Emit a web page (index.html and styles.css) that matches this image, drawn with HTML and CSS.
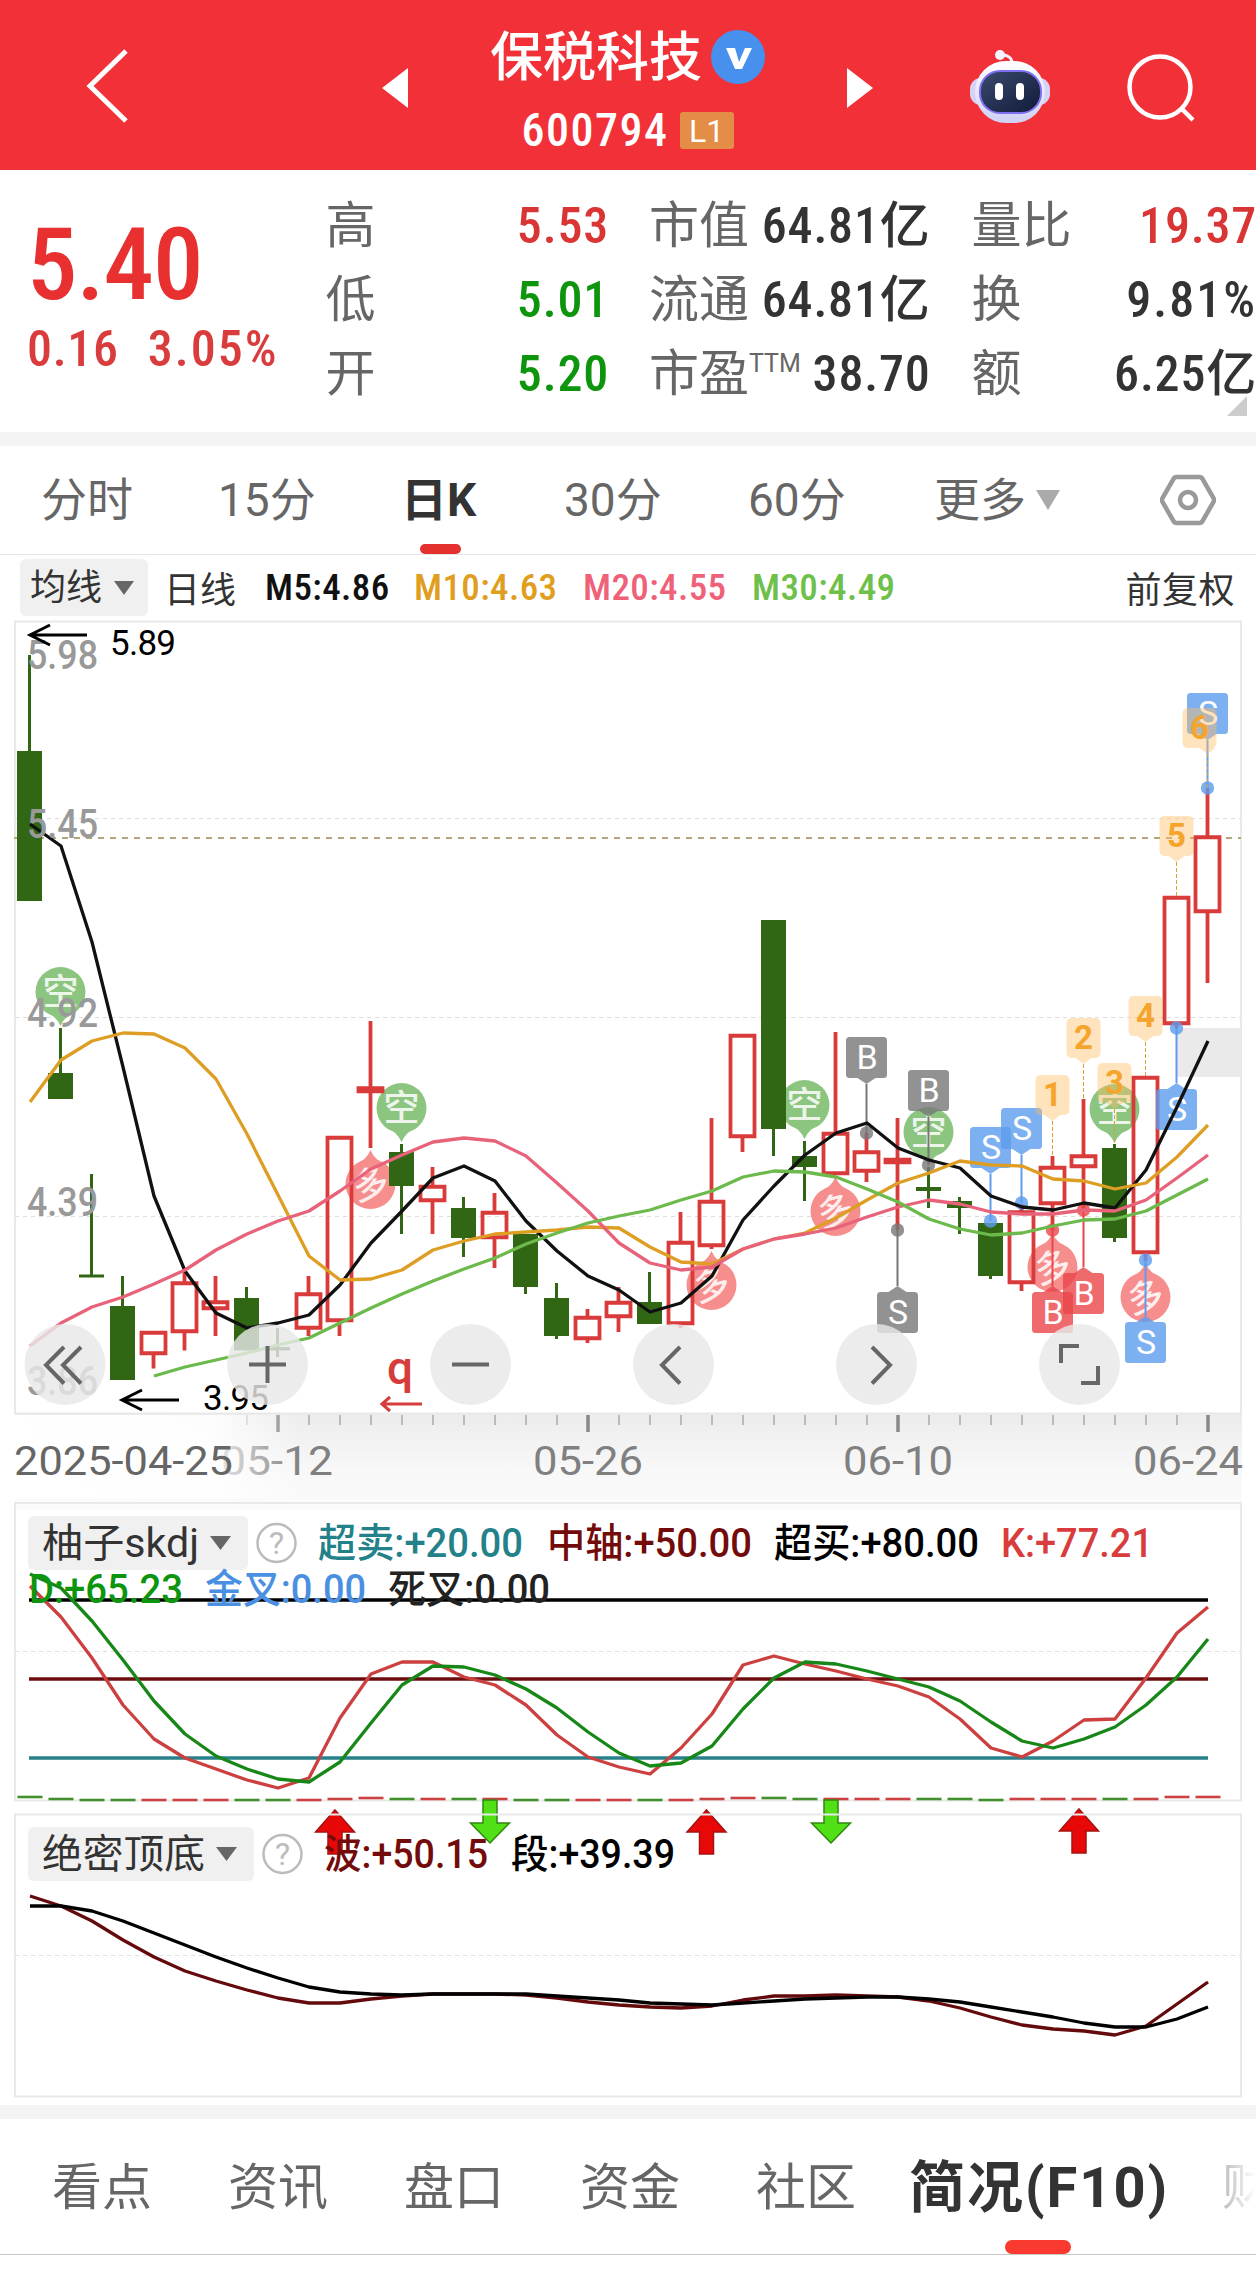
FILE: index.html
```html
<!DOCTYPE html>
<html lang="zh-CN">
<head>
  <meta charset="UTF-8">
  <meta name="viewport" content="width=device-width, initial-scale=1.0">
  <title>保税科技 600794</title>
  <link rel="stylesheet" href="styles.css">
</head>
<body>
  <header class="topbar">
    <svg class="back" width="48" height="80" viewBox="0 0 48 80"><path d="M42 5L6 40l36 35" fill="none" stroke="#fff" stroke-width="5"/></svg>
    <svg class="prev" width="26" height="40" viewBox="0 0 26 40"><path d="M26 0v40L0 20z" fill="#fff"/></svg>
    <div class="stock">
      <div class="stock-name">保税科技
        <svg width="54" height="54" viewBox="0 0 54 54"><circle cx="27" cy="27" r="27" fill="#4790ee"/><path d="M15 18h9l4 14 6-14h7L31 39h-7z" fill="#fff"/></svg>
      </div>
      <div class="stock-code"><span class="num">600794</span><span class="level">L1</span></div>
    </div>
    <svg class="next" width="26" height="40" viewBox="0 0 26 40"><path d="M0 0v40l26-20z" fill="#fff"/></svg>
    <svg class="robot" width="82" height="76" viewBox="0 0 82 76">
      <defs>
        <linearGradient id="shell" x1="0" y1="0" x2="0" y2="1"><stop offset="0" stop-color="#fff"/><stop offset="1" stop-color="#cfd0f4"/></linearGradient>
        <linearGradient id="face" x1="0" y1="0" x2="1" y2="1"><stop offset="0" stop-color="#3a4a6e"/><stop offset="1" stop-color="#101a38"/></linearGradient>
      </defs>
      <path d="M43 14c0-5-4-8-10-8" fill="none" stroke="#eef" stroke-width="3"/>
      <circle cx="31" cy="6" r="5" fill="#f4f4ff"/>
      <rect x="1" y="29" width="80" height="27" rx="11" fill="#d5d2f6"/>
      <rect x="6" y="12" width="70" height="62" rx="31" fill="url(#shell)"/>
      <rect x="11" y="22" width="61" height="42" rx="20" fill="url(#face)" stroke="#7d6ff0" stroke-width="2"/>
      <rect x="26" y="34" width="8" height="17" rx="4" fill="#fff"/>
      <rect x="47" y="34" width="8" height="17" rx="4" fill="#fff"/>
    </svg>
    <svg class="search" width="72" height="72" viewBox="0 0 72 72"><circle cx="34" cy="36" r="30.5" fill="none" stroke="#fff" stroke-width="4.5"/><path d="M55 57l12 12" stroke="#fff" stroke-width="4.5"/></svg>
  </header>

  <section class="quote">
    <div class="price">
      <div class="price-now num">5.40</div>
      <div class="price-diff num"><span>0.16</span><span class="pct">3.05%</span></div>
    </div>
    <dl class="stats col-a">
      <div><dt>高</dt><dd class="up">5.53</dd></div>
      <div><dt>低</dt><dd class="down">5.01</dd></div>
      <div><dt>开</dt><dd class="down">5.20</dd></div>
    </dl>
    <dl class="stats col-b">
      <div><dt>市值</dt><dd>64.81亿</dd></div>
      <div><dt>流通</dt><dd>64.81亿</dd></div>
      <div><dt>市盈<sup>TTM</sup></dt><dd>38.70</dd></div>
    </dl>
    <dl class="stats col-c">
      <div><dt>量比</dt><dd class="up">19.37</dd></div>
      <div><dt>换</dt><dd class="pct">9.81%</dd></div>
      <div><dt>额</dt><dd>6.25亿</dd></div>
    </dl>
    <i class="corner"></i>
  </section>

  <nav class="periods">
    <a>分时</a>
    <a>15分</a>
    <a class="active">日K</a>
    <a>30分</a>
    <a>60分</a>
    <a>更多<i class="caret light"></i></a>
    <svg width="56" height="52" viewBox="0 0 56 52"><path d="M16.500 3h23q2 0 3 2l11 19q1 2 0 4l-11 19q-1 2-3 2h-23q-2 0-3-2L2.500 28q-1-2 0-4l11-19q1-2 3-2z" fill="none" stroke="#999" stroke-width="4.500"/><circle cx="28" cy="26" r="8" fill="none" stroke="#999" stroke-width="4.500"/></svg>
  </nav>

  <div class="ma-row">
    <span class="chip">均线<i class="caret"></i></span>
    <span class="ma-day">日线</span>
    <span class="ma m5">M5:4.86</span>
    <span class="ma m10">M10:4.63</span>
    <span class="ma m20">M20:4.55</span>
    <span class="ma m30">M30:4.49</span>
    <span class="adjust">前复权</span>
  </div>

  <svg class="chart" width="1256" height="882" viewBox="0 618 1256 882">
    <defs>
      <linearGradient id="axisFade" x1="0" y1="0" x2="0" y2="1"><stop offset="0" stop-color="#ececec"/><stop offset=".6" stop-color="#f8f8f8"/><stop offset="1" stop-color="#fbfbfb"/></linearGradient>
      <linearGradient id="leftFade" x1="0" y1="0" x2="1" y2="0"><stop offset="0" stop-color="#fff"/><stop offset=".7" stop-color="#fff" stop-opacity=".9"/><stop offset="1" stop-color="#fff" stop-opacity="0"/></linearGradient>
    </defs>
    <rect x="15" y="1414" width="1227" height="94" fill="url(#axisFade)"/>
    <path class="frame" d="M15 621.500H1241V1413.500H15z"/>
    <path class="grid" d="M15 818.500H1241M15 1017.500H1241M15 1216.500H1241"/>
    <path d="M14 838H1241" fill="none" stroke="#b5a47c" stroke-width="2" stroke-dasharray="6 6"/>
    <rect x="1177" y="1028" width="63" height="49" fill="#eaeaea"/>
    <g id="balloons"></g>
    <g id="candles"></g>
    <g id="signals"></g>
    <g id="averages"></g>
    <g id="steps"></g>
    <g id="ticks"></g>

    <g class="scale">
      <text x="27" y="669" textLength="71" lengthAdjust="spacingAndGlyphs">5.98</text>
      <text x="27" y="838" textLength="71" lengthAdjust="spacingAndGlyphs">5.45</text>
      <text x="27" y="1027" textLength="71" lengthAdjust="spacingAndGlyphs">4.92</text>
      <text x="27" y="1216" textLength="71" lengthAdjust="spacingAndGlyphs">4.39</text>
      <text x="27" y="1395" textLength="71" lengthAdjust="spacingAndGlyphs">3.86</text>
    </g>
    <path d="M87 635H30M50 625L30 635l20 10M179 1400H123M142 1390l-20 10 20 10" fill="none" stroke="#000" stroke-width="3"/>
    <text class="peak" x="110" y="655" textLength="66">5.89</text>
    <text class="peak" x="203" y="1410" textLength="66">3.95</text>
    <text class="q" x="387" y="1384">q</text>
    <path d="M422 1404H382M390 1397l-8 7 8 7" fill="none" stroke="#d63c3c" stroke-width="3"/>

    <g class="dates">
      <text x="221" y="1475" textLength="112" lengthAdjust="spacingAndGlyphs">05-12</text>
      <text x="533" y="1475" textLength="110" lengthAdjust="spacingAndGlyphs">05-26</text>
      <text x="843" y="1475" textLength="110" lengthAdjust="spacingAndGlyphs">06-10</text>
      <text x="1133" y="1475" textLength="110" lengthAdjust="spacingAndGlyphs">06-24</text>
    </g>
    <rect x="0" y="1415" width="300" height="84" fill="url(#leftFade)"/>
    <text class="date-first" x="14" y="1475" textLength="219" lengthAdjust="spacingAndGlyphs">2025-04-25</text>

    <g class="tools">
      <circle cx="65" cy="1364.500" r="40.500"/><path d="M64 1347l-18 18 18 18.500M81 1347l-18 18 18 18.500"/>
      <circle cx="267.500" cy="1364.500" r="40.500"/><path d="M249 1364.500h37M267.500 1346v37"/>
      <circle cx="470.500" cy="1364.500" r="40.500"/><path d="M452 1364.500h37"/>
      <circle cx="673.500" cy="1364.500" r="40.500"/><path d="M680 1347l-18 18 18 18.500"/>
      <circle cx="876.500" cy="1364.500" r="40.500"/><path d="M872 1347l18 18-18 18.500"/>
      <circle cx="1079.500" cy="1364.500" r="40.500"/><path d="M1061 1363v-17h18M1081 1383h17v-17"/>
    </g>
  </svg>

  <svg class="chart" width="1256" height="311" viewBox="0 1500 1256 311">
    <rect x="15" y="1500" width="1226" height="10" fill="#fbfbfb"/>
    <path class="frame" d="M15 1503H1241V1800.500H15z"/>
    <path class="grid" d="M15 1651.500H1241"/>
    <path d="M29 1600H1208" stroke="#000" stroke-width="3.500"/>
    <path d="M29 1679H1208" stroke="#6d0c0e" stroke-width="3.500"/>
    <path d="M29 1758H1208" stroke="#27808a" stroke-width="3.500"/>
    <g id="skdj"></g>
    <rect x="28" y="1516" width="220" height="54" rx="6" fill="#f0f0f0"/>
    <text class="chip-text" x="42" y="1557" textLength="157" lengthAdjust="spacingAndGlyphs">柚子skdj</text>
    <path d="M210 1536h21l-10.500 14z" fill="#666"/>
    <circle cx="276.500" cy="1543" r="19" fill="none" stroke="#bbb" stroke-width="2.500"/>
    <text class="help" x="276.500" y="1554">?</text>
    <g class="legend">
      <text x="318" y="1557" fill="#23818a" textLength="205" lengthAdjust="spacingAndGlyphs">超卖:+20.00</text>
      <text x="547" y="1557" fill="#730b0b" textLength="205" lengthAdjust="spacingAndGlyphs">中轴:+50.00</text>
      <text x="774" y="1557" fill="#000" textLength="205" lengthAdjust="spacingAndGlyphs">超买:+80.00</text>
      <text x="1001" y="1557" fill="#d93c3c" textLength="152" lengthAdjust="spacingAndGlyphs">K:+77.21</text>
      <text x="29" y="1603" fill="#0e950e" textLength="154" lengthAdjust="spacingAndGlyphs">D:+65.23</text>
      <text x="205" y="1603" fill="#4a90e2" textLength="161" lengthAdjust="spacingAndGlyphs">金叉:0.00</text>
      <text x="388" y="1603" fill="#222" textLength="162" lengthAdjust="spacingAndGlyphs">死叉:0.00</text>
    </g>
    <g id="arrows"></g>
  </svg>

  <svg class="chart" width="1256" height="294" viewBox="0 1811 1256 294">
    <path class="frame" d="M15 1814.500H1241V2096.500H15z"/>
    <path class="grid" d="M15 1955.500H1241"/>
    <g id="wave"></g>
    <rect x="28" y="1827" width="226" height="54" rx="6" fill="#f0f0f0"/>
    <text class="chip-text" x="42" y="1868" textLength="163" lengthAdjust="spacingAndGlyphs">绝密顶底</text>
    <path d="M216 1847h21l-10.500 14z" fill="#666"/>
    <circle cx="282.500" cy="1854" r="19" fill="none" stroke="#bbb" stroke-width="2.500"/>
    <text class="help" x="282.500" y="1865">?</text>
    <g class="legend">
      <text x="324" y="1868" fill="#730b0b" textLength="164" lengthAdjust="spacingAndGlyphs">波:+50.15</text>
      <text x="511" y="1868" fill="#000" textLength="164" lengthAdjust="spacingAndGlyphs">段:+39.39</text>
    </g>
  </svg>

  <nav class="sections">
    <a>看点</a>
    <a>资讯</a>
    <a>盘口</a>
    <a>资金</a>
    <a>社区</a>
    <a class="active">简况(F10)</a>
    <a class="faded">财</a>
  </nav>

  <script src="script.js"></script>
</body>
</html>
```

FILE: styles.css
```css
* {
  box-sizing: border-box;
}
body {
  margin: 0;
  width: 1256px;
  height: 2287px;
  overflow: hidden;
  background: #fff;
  color: #333;
  font-family: Roboto, "Noto Sans CJK SC", sans-serif;
}
svg {
  display: block;
  flex: none;
}
a {
  white-space: nowrap;
}
.num, .stats dd, .ma {
  font-stretch: 87.5%;
}

/* top bar */
.topbar {
  display: flex;
  height: 170px;
  background: #f13038;
  color: #fff;
}
.back {
  margin: 46px 0 0 84px;
}
.prev {
  margin: 68px 0 0 250px;
}
.stock {
  width: 439px;
  padding-top: 26px;
}
.stock-name {
  display: flex;
  justify-content: center;
  align-items: center;
  gap: 9px;
  height: 64px;
  font-size: 53px;
  font-weight: 500;
  line-height: 60px;
}
.stock-name svg {
  margin-top: -2px;
}
.stock-code {
  display: flex;
  justify-content: center;
  align-items: center;
  gap: 11px;
  height: 80px;
  font-size: 46px;
  font-weight: 500;
  letter-spacing: 1.5px;
}
.level {
  width: 54px;
  height: 37px;
  background: #e38d47;
  border-radius: 3px;
  font-size: 32px;
  font-weight: 400;
  line-height: 38px;
  letter-spacing: 0;
  text-align: center;
}
.next {
  margin-top: 68px;
}
.robot {
  margin: 49px 0 0 96px;
}
.search {
  margin: 51px 0 0 75px;
}

/* quote */
.quote {
  position: relative;
  display: flex;
  height: 276px;
  border-bottom: 14px solid #f4f4f4;
}
.price {
  width: 326px;
  padding: 49px 0 0 27px;
  color: #e83030;
}
.price-now {
  font-size: 101px;
  font-weight: 500;
  line-height: 92px;
  letter-spacing: -1px;
}
.price-diff {
  display: flex;
  gap: 29px;
  margin-top: 9px;
  color: #d93c3c;
  font-size: 50px;
  line-height: 58px;
  font-weight: 500;
  letter-spacing: .7px;
}
.stats {
  margin: 19px 0 0;
  line-height: 74px;
  white-space: nowrap;
}
.stats div {
  display: flex;
  justify-content: space-between;
  height: 74px;
}
.stats dt {
  color: #666;
  font-size: 50px;
}
.stats dd {
  margin: 0 -1px 0 0;
  font-size: 50px;
  font-weight: 500;
  letter-spacing: .8px;
}
.price-diff .pct, .stats .pct {
  letter-spacing: 2px;
}
.stats sup {
  font-size: 25px;
  line-height: 0;
  vertical-align: 19px;
}
.col-a {
  width: 283px;
}
.col-b {
  width: 281px;
  margin-left: 41px;
}
.col-c {
  width: 285px;
  margin-left: 42px;
}
.up {
  color: #d93535;
}
.down {
  color: #0e950e;
}
.corner {
  position: absolute;
  right: 9px;
  bottom: 16px;
  border-left: 20px solid transparent;
  border-bottom: 20px solid #ccc;
}

/* period tabs */
.periods {
  position: relative;
  display: flex;
  height: 109px;
  padding-left: 41px;
  border-bottom: 1px solid #e4e4e4;
  color: #666;
  font-size: 46px;
  line-height: 109px;
}
.periods a {
  width: 177px;
}
.periods a:nth-child(2) {
  width: 183px;
}
.periods a:nth-child(3) {
  width: 163px;
}
.periods a:nth-child(4) {
  width: 184px;
}
.periods a:nth-child(5) {
  width: 186px;
}
.periods a:nth-child(6) {
  width: 226px;
}
.periods svg {
  margin-top: 28px;
}
.periods .active {
  position: relative;
  color: #333;
  font-weight: 700;
}
.periods .active::after {
  content: "";
  position: absolute;
  left: 19px;
  bottom: 0;
  width: 41px;
  height: 10px;
  border-radius: 5px;
  background: #e53030;
}
.caret {
  display: inline-block;
  margin-left: 12px;
  border: 10.5px solid transparent;
  border-top: 14px solid #666;
  border-bottom: 0;
  vertical-align: 5px;
}
.caret.light {
  margin-left: 10px;
  border-width: 20px 12.5px 0;
  border-top-color: #aaa;
  vertical-align: 6px;
}

/* moving averages */
.ma-row {
  display: flex;
  align-items: center;
  height: 63px;
  padding: 2px 21px 0 20px;
  font-size: 36px;
  white-space: nowrap;
}
.chip {
  width: 128px;
  height: 57px;
  padding-left: 10px;
  background: #f0f0f0;
  border-radius: 6px;
  line-height: 58px;
}
.ma-day {
  margin: -2px 0 0 16px;
  width: 101px;
}
.ma {
  width: 149px;
  font-size: 37px;
  font-weight: 470;
  letter-spacing: .4px;
}
.ma.m10, .ma.m20, .ma.m30 {
  width: 169px;
}
.m5 { color: #111; }
.m10 { color: #e09e1e; }
.m20 { color: #ee6178; }
.m30 { color: #6ec04a; }
.adjust {
  margin: -2px 0 0 auto;
  letter-spacing: .5px;
}

/* charts */
.chart {
  overflow: visible;
}
.frame {
  fill: none;
  stroke: #e9e9e9;
  stroke-width: 2;
}
.grid {
  fill: none;
  stroke: #ddd;
  stroke-width: 1;
  stroke-dasharray: 4 4;
}
.line {
  fill: none;
  stroke-width: 3.3;
  stroke-linejoin: round;
}
.scale {
  fill: #999;
  font-size: 40px;
  font-weight: 500;
}
.peak {
  fill: #000;
  font-size: 35px;
}
.q {
  fill: #d63c3c;
  font-size: 46px;
  font-weight: 500;
}
.dates, .date-first {
  fill: #808080;
  font-size: 40px;
  font-weight: 450;
}
.date-first {
  fill: #666;
}
.tools circle {
  fill: #e8e8e8;
  fill-opacity: .82;
}
.tools path {
  fill: none;
  stroke: #666;
  stroke-width: 4;
}
.balloon text {
  fill: #fff;
  fill-opacity: .85;
  font-size: 36px;
  font-weight: 500;
  text-anchor: middle;
}
.signal text {
  fill: #fff;
  font-size: 34px;
  text-anchor: middle;
}
.step text {
  fill: #f5a42c;
  font-size: 33px;
  font-weight: 700;
  text-anchor: middle;
}
.chip-text {
  fill: #333;
  font-size: 40px;
}
.help {
  fill: #bbb;
  font-size: 32px;
  text-anchor: middle;
}
.legend {
  font-size: 40px;
  font-weight: 470;
}

/* bottom tabs */
.sections {
  display: flex;
  height: 150px;
  padding-left: 52px;
  border-top: 14px solid #f4f4f4;
  border-bottom: 1px solid #c8c8c8;
  color: #666;
  font-size: 50px;
  line-height: 139px;
}
.sections a {
  flex: none;
  width: 176px;
}
.sections a:nth-child(5) {
  width: 153px;
}
.sections .active {
  position: relative;
  width: 313px;
  height: 135px;
  color: #333;
  font-size: 56px;
  font-weight: 700;
  letter-spacing: 2px;
}
.sections .active::after {
  content: "";
  position: absolute;
  left: 96px;
  bottom: 0;
  width: 66px;
  height: 14px;
  border-radius: 7px;
  background: #fa3a30;
}
.sections .faded {
  width: 34px;
  overflow: hidden;
  color: transparent;
  background: linear-gradient(90deg, #bbb, #fff);
  -webkit-background-clip: text;
  background-clip: text;
}
```

FILE: script.js
```js
const GAP = 31;
const xAt = i => 29.5 + GAP * i;
const put = (id, html) => { document.getElementById(id).innerHTML = html; };

// [direction, high, body top, body bottom, low]
const candles = [
  ['g', 655, 751, 901, 901], ['g', 1028, 1073, 1099, 1099], ['g', 1174, 1274.5, 1277.5, 1277], ['g', 1276, 1306, 1380, 1380],
  ['r', 1331, 1331, 1355, 1368.5], ['r', 1270, 1281.5, 1333, 1350.5], ['r', 1276, 1300.5, 1310, 1336], ['g', 1287, 1298, 1350.5, 1350],
  ['g', 1328, 1347, 1350.5, 1357], ['r', 1276, 1292.5, 1329.5, 1336], ['r', 1136, 1136, 1322, 1336], ['r', 1021, 1086.5, 1093, 1148],
  ['g', 1144, 1152, 1186, 1234], ['r', 1167, 1185, 1202, 1234], ['g', 1197, 1208, 1238, 1257], ['r', 1193, 1211, 1239, 1268],
  ['g', 1234, 1234, 1287, 1294], ['g', 1283, 1298, 1336, 1339], ['r', 1309, 1316, 1340, 1343], ['r', 1287, 1301, 1318, 1332],
  ['g', 1272, 1302, 1324, 1324], ['r', 1212, 1241, 1325, 1328], ['r', 1118, 1200, 1247, 1249], ['r', 1034, 1034, 1138, 1152],
  ['g', 920, 920, 1129, 1156], ['g', 1141, 1156, 1167, 1201], ['r', 1032, 1132, 1175, 1175], ['r', 1133, 1150.5, 1172.5, 1182],
  ['r', 1118, 1158, 1164, 1230], ['g', 1167, 1187, 1191, 1208], ['g', 1197, 1201, 1208, 1234], ['g', 1223, 1223, 1276, 1279],
  ['r', 1204, 1210.5, 1284, 1291], ['r', 1156, 1166, 1205, 1230], ['r', 1099, 1154.5, 1168, 1210], ['g', 1144, 1148, 1238, 1242],
  ['r', 1076, 1076, 1254, 1261], ['r', 896, 896, 1025, 1028], ['r', 788, 835.5, 913, 983]
];

const ma5 = [824, 846, 942, 1067, 1196, 1271, 1313, 1328, 1323, 1315, 1285, 1243, 1211, 1178, 1166, 1181, 1221, 1251, 1276, 1290, 1312, 1303, 1276, 1220, 1186, 1155, 1133, 1123, 1148, 1160, 1168, 1196, 1207, 1210, 1203, 1208, 1170, 1107, 1041];
const ma10 = [1102, 1060, 1041, 1033, 1034, 1048, 1079, 1134, 1195, 1256, 1280, 1279, 1270, 1250, 1241, 1234, 1232, 1230, 1227, 1228, 1247, 1262, 1264, 1249, 1239, 1233, 1218, 1200, 1183, 1173, 1161, 1165, 1166, 1179, 1181, 1189, 1183, 1157, 1125];
const ma20 = [1346, 1323, 1307, 1297, 1284, 1270, 1250, 1234, 1221, 1211, 1191, 1169, 1155, 1142, 1138, 1141, 1156, 1183, 1211, 1243, 1263, 1270, 1267, 1249, 1239, 1234, 1228, 1217, 1207, 1200, 1204, 1212, 1214, 1214, 1210, 1211, 1200, 1178, 1155];
const ma30 = [1376, 1367, 1360, 1353, 1345, 1338, 1323, 1308, 1294, 1281, 1269, 1258, 1244, 1233, 1223, 1216, 1210, 1200, 1191, 1177, 1171, 1172, 1177, 1189, 1202, 1219, 1229, 1235, 1233, 1226, 1220, 1219, 1211, 1195, 1179];

const kLine = [1586, 1617, 1658, 1705, 1739, 1758, 1769, 1780, 1788, 1778, 1718, 1674, 1662, 1662, 1677, 1685, 1705, 1735, 1757, 1767, 1774, 1748, 1714, 1665, 1656, 1664, 1671, 1679, 1686, 1697, 1719, 1748, 1757, 1741, 1720, 1719, 1678, 1633, 1607];
const dLine = [1574, 1588, 1621, 1660, 1701, 1734, 1756, 1769, 1779, 1782, 1762, 1723, 1685, 1666, 1667, 1675, 1689, 1708, 1732, 1753, 1766, 1763, 1746, 1709, 1678, 1662, 1664, 1671, 1679, 1687, 1701, 1722, 1741, 1748, 1739, 1727, 1705, 1677, 1639];

const wave = [1896, 1906, 1921, 1940, 1957, 1971, 1981, 1990, 1998, 2003, 2003, 1999, 1996, 1994, 1994, 1994, 1995, 1998, 2002, 2005, 2007, 2008, 2006, 2000, 1996, 1996, 1995, 1996, 1997, 2001, 2008, 2017, 2025, 2029, 2031, 2035, 2026, 2004, 1982];
const trend = [1906, 1906, 1911, 1921, 1933, 1945, 1957, 1968, 1978, 1987, 1992, 1994, 1995, 1994, 1994, 1994, 1994, 1996, 1998, 2000, 2003, 2004, 2005, 2003, 2001, 1999, 1998, 1997, 1997, 1999, 2002, 2007, 2012, 2017, 2023, 2027, 2027, 2019, 2007];

function line(ys, color, start = 0) {
  const pts = ys.map((y, i) => `${xAt(i + start) + .5},${y}`).join(' ');
  return `<polyline class="line" points="${pts}" stroke="${color}"/>`;
}

put('candles', candles.map(([dir, high, top, bottom, low], i) => {
  const x = xAt(i);
  if (dir === 'g') {
    return `<path d="M${x - 12.5} ${top}h25V${bottom}h-25zM${x - 1.5} ${high}h3V${low}h-3z" fill="#306614"/>`;
  }
  const h = Math.max(bottom - top - 3.5, 2.5);
  return `<path d="M${x} ${high}V${top}M${x} ${bottom}V${low}M${x - 12} ${top + 1.75}h24v${h}h-24z" fill="none" stroke="#d93a3a" stroke-width="3.8"/>`;
}).join(''));

put('averages', line(ma5, '#111') + line(ma10, '#de9e24') + line(ma20, '#e8637a') + line(ma30, '#6cba4c', 4));

// balloons: [index, centre y, character]
const balloons = [[1, 992, '空'], [12, 1108, '空'], [25, 1105, '空'], [29, 1132, '空'], [35, 1109, '空'],
  [11, 1184, '多'], [22, 1285, '多'], [26, 1211, '多'], [33, 1267, '多'], [36, 1297, '多']];
put('balloons', balloons.map(([i, y, ch]) => {
  const x = xAt(i);
  const s = ch === '空' ? 1 : -1;
  const color = s > 0 ? '#8cc580' : '#f78e8e';
  return `<g class="balloon"><path d="M${x - 16} ${y + 19 * s}Q${x - 4} ${y + 24 * s} ${x} ${y + 34 * s}Q${x + 4} ${y + 24 * s} ${x + 16} ${y + 19 * s}z" fill="${color}"/>
    <circle cx="${x}" cy="${y}" r="25" fill="${color}"/>
    <text x="${x}" y="${y + 13}"${s < 0 ? ` transform="rotate(-15 ${x} ${y})"` : ''}>${ch}</text></g>`;
}).join(''));

// trade signals: [index, box top, dot y, letter, colour]
const signals = [[27, 1037, 1133, 'B', '#777'], [29, 1070, 1165, 'B', '#777'], [28, 1292, 1230, 'S', '#777'],
  [31, 1127, 1221, 'S', '#5d9cee'], [32, 1108, 1203, 'S', '#5d9cee'], [37, 1089, 1028, 'S', '#5d9cee'],
  [36, 1322, 1260, 'S', '#5d9cee'], [38, 693, 788, 'S', '#5d9cee'], [33, 1292, 1230, 'B', '#ea4548'], [34, 1273, 1210, 'B', '#ea4548']];
put('signals', signals.map(([i, top, dot, ch, color]) => {
  const x = xAt(i);
  const above = dot > top;
  const edge = above ? top + 41 : top;
  const tip = above ? edge + 6 : edge - 6;
  return `<g class="signal"><path d="M${x} ${tip}V${dot}" stroke="${color}" stroke-width="2"/>
    <circle cx="${x}" cy="${dot}" r="6.7" fill="${color}" fill-opacity=".8"/>
    <rect x="${x - 20.5}" y="${top}" width="41" height="41" rx="3.5" fill="${color}" fill-opacity=".8"/>
    <path d="M${x - 9} ${edge}h18L${x} ${tip}z" fill="${color}" fill-opacity=".8"/>
    <text x="${x + .5}" y="${top + 32}">${ch}</text></g>`;
}).join(''));

// step counters: [index, number, box top, end of leader, box shift]
const steps = [[33, 1, 1075, 1156, 0], [34, 2, 1018, 1099, 0], [35, 3, 1063, 1144, 0], [36, 4, 996, 1076, 0], [37, 5, 816, 896, 0], [38, 6, 708, 788, -8]];
put('steps', steps.map(([i, n, top, end, shift]) => {
  const x = xAt(i);
  return `<g class="step"><rect x="${x - 17 + shift}" y="${top}" width="34" height="40" rx="5" fill="#fdbf66" fill-opacity=".43"/>
    <path d="M${x - 8} ${top + 40}h16l-8 6z" fill="#fdbf66" fill-opacity=".43"/>
    <path d="M${x} ${top + 46}V${end}" stroke="#e0a030" stroke-dasharray="4 2"/>
    <text x="${x + shift}" y="${top + 31}">${n}</text></g>`;
}).join(''));

let ticks = '';
for (let i = 7; i < 39; i++) {
  const major = i % 10 === 8;
  ticks += `<path d="M${xAt(i) + .5} 1415v${major ? 17 : 10}" stroke="${major ? '#888' : '#bbb'}" stroke-width="${major ? 3.5 : 2}"/>`;
}
put('ticks', ticks);

const barColors = 'ggggrrrggrrrgrgrggrrgrrrggrrrgggrrrgrrr';
const barY = [1797, 1799, 1800, 1800, 1800, 1800, 1800, 1800, 1800, 1800, 1799, 1798, 1799, 1799, 1799, 1799, 1800, 1800, 1800, 1800, 1800, 1800, 1799, 1798, 1798, 1799, 1799, 1799, 1799, 1799, 1799, 1800, 1799, 1799, 1799, 1799, 1799, 1797, 1797];
put('skdj', barY.map((y, i) =>
  `<path d="M${xAt(i) - 12} ${y}h25" stroke="${barColors[i] === 'g' ? '#43902f' : '#cc4242'}" stroke-width="2.6"/>`).join('')
  + line(kLine, '#cc4040') + line(dLine, '#178717'));

put('wave', line(wave, '#650a0c') + line(trend, '#000'));

const up = (x, y) => `<path d="M${x} ${y}l19.500 22h-12.500v22h-14v-22h-12.500z" fill="#e80808" stroke="#a51212" stroke-width="1.500"/>`;
const down = (x, y) => `<path d="M${x} ${y + 43}l19.500-20h-12.500v-23h-14v23h-12.500z" fill="#51e016" stroke="#30870f" stroke-width="1.500"/>`;
put('arrows', up(335, 1810) + up(706.5, 1810) + up(1079, 1809) + down(490, 1800) + down(831, 1800));
```
